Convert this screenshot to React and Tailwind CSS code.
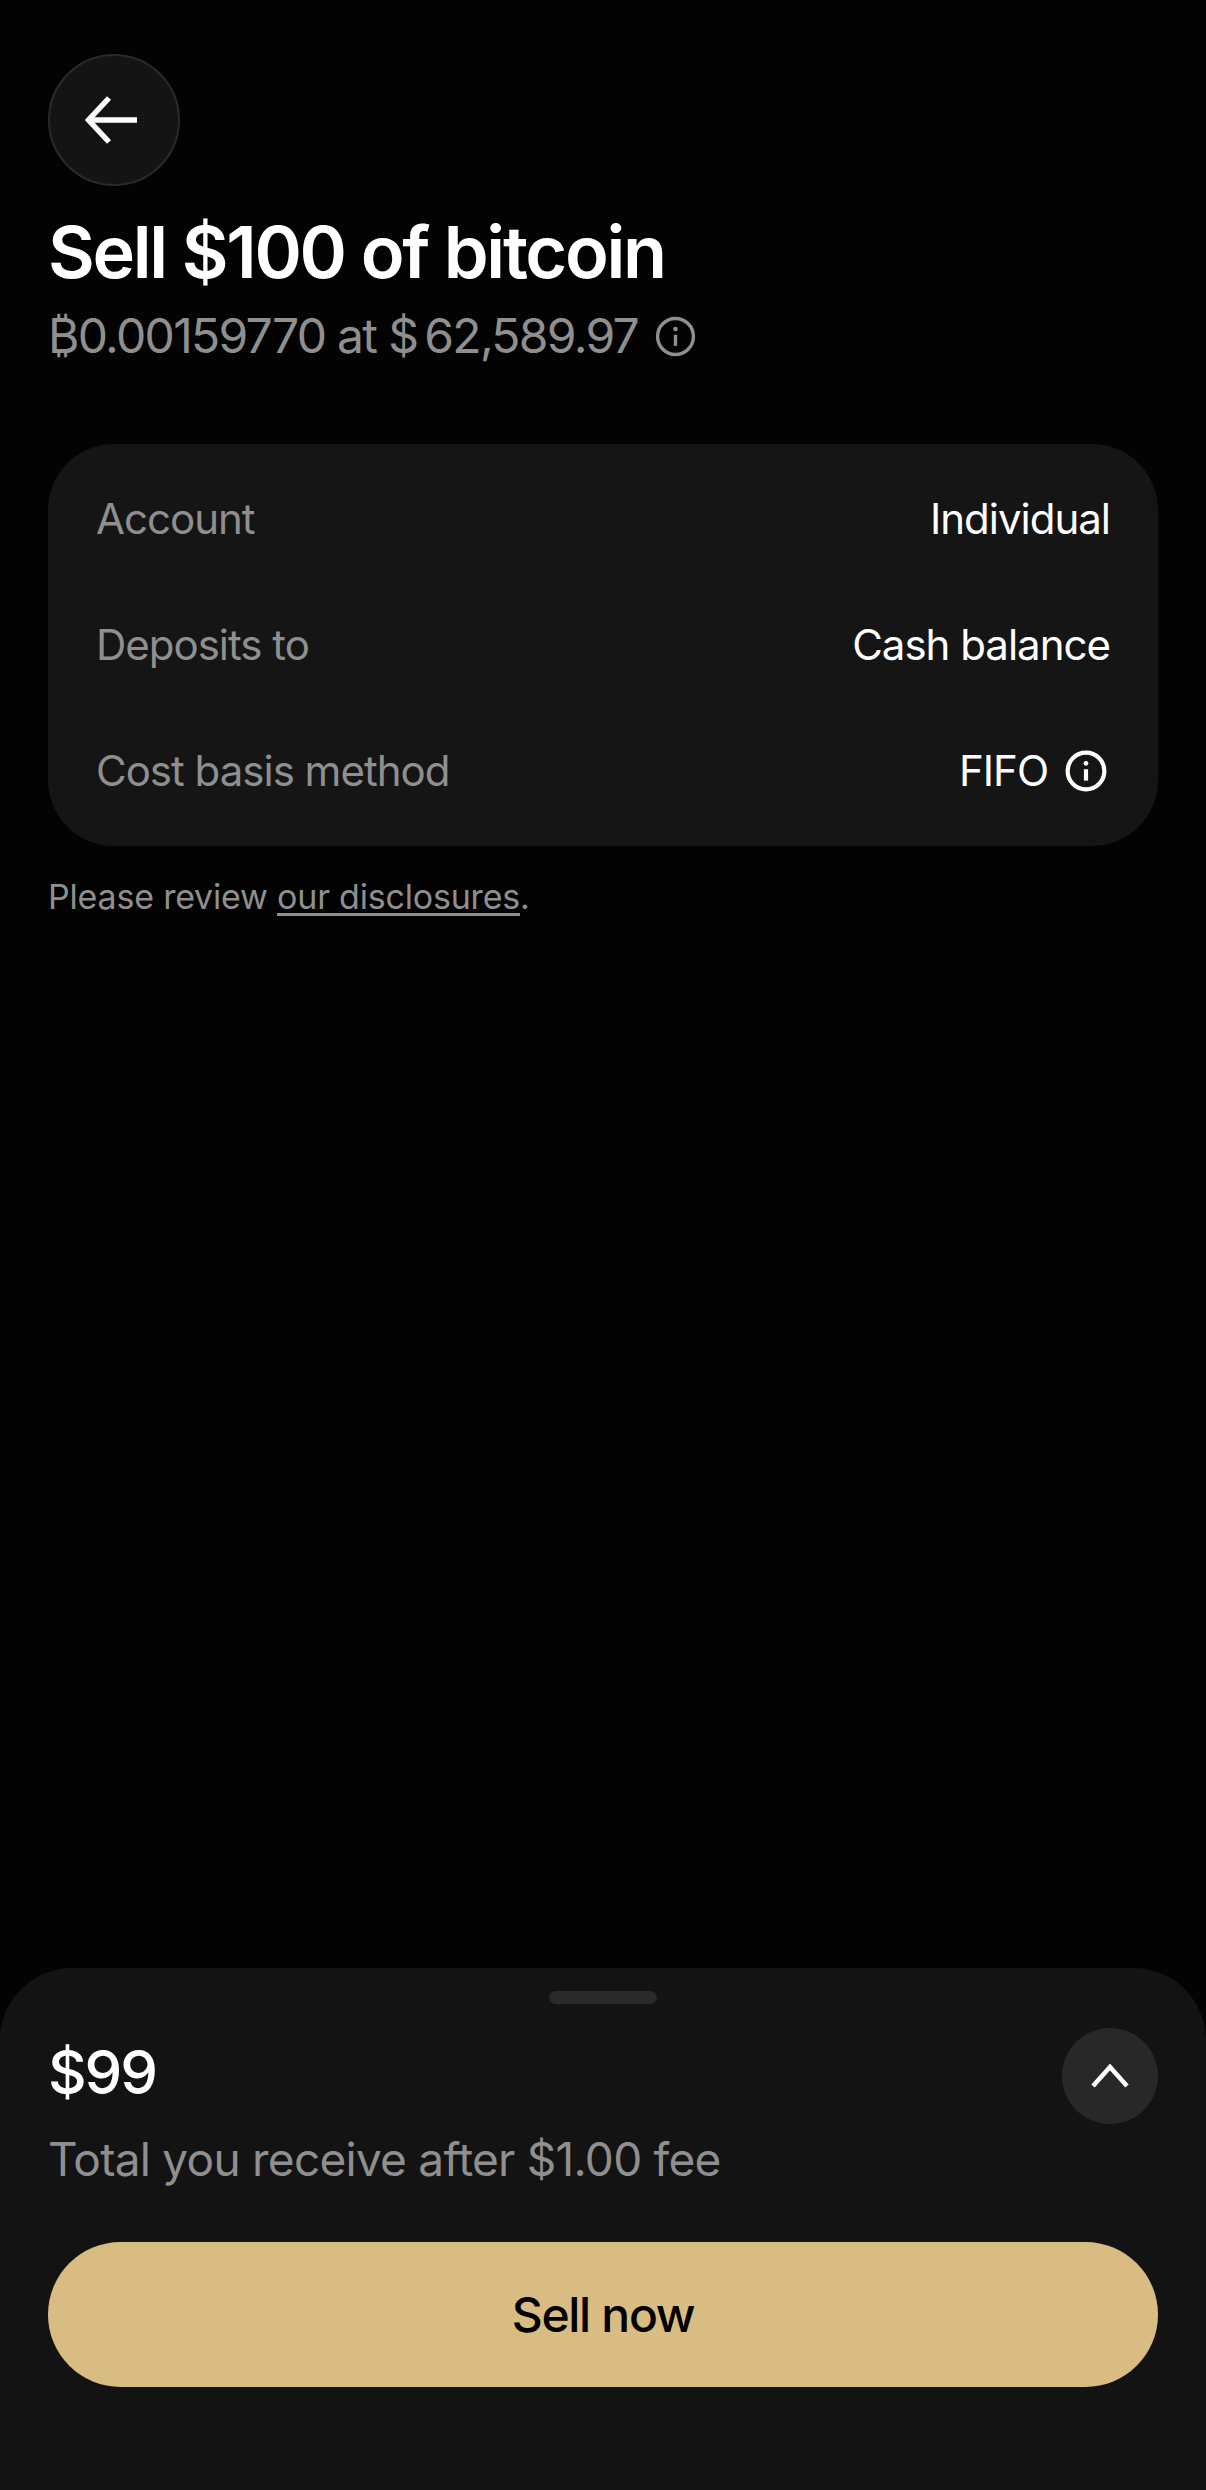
const font = "font-['Inter','Liberation_Sans',sans-serif]";

function Info({ className, sw = 2 }) {
  return (
    <svg viewBox="0 0 24 24" fill="none" className={className}>
      <circle cx="12" cy="12" r="10.5" stroke="currentColor" strokeWidth={sw} />
      <circle cx="12" cy="7.6" r="1.35" fill="currentColor" />
      <path d="M12 11v6.5" stroke="currentColor" strokeWidth={sw} />
    </svg>
  );
}

function Row({ label, children }) {
  return (
    <div className="flex items-center justify-between h-[126px]">
      <span className="text-[42px] leading-[48px] text-[#8f8f8f] tracking-[-1px]">{label}</span>
      <div className="flex items-center text-[42px] leading-[48px] text-white tracking-[-1px]">{children}</div>
    </div>
  );
}

export default function App() {
  return (
    <div className={`${font} w-[1206px] h-[2490px] bg-[#030303] flex flex-col overflow-hidden`}>
      <div className="flex-1 px-12 pt-[54px]">
        <button className="w-[132px] h-[132px] rounded-full bg-[#141414] border-2 border-[#2a2a2a] flex items-center justify-center text-white">
          <svg viewBox="0 0 52 48" fill="none" className="w-[52px] h-[48px] mr-[6px]">
            <path d="M52 24H4M24 2 3.5 24 24 46" stroke="currentColor" strokeWidth="5.5" />
          </svg>
        </button>
        <h1 className="mt-[26px] text-[72px] leading-[80px] font-semibold text-white tracking-[-2.3px]">Sell $100 of bitcoin</h1>
        <div className="mt-4 flex items-center text-[48px] leading-[56px] text-[#8f8f8f] tracking-[-1.7px]">
          <span>₿0.00159770 at $&#8201;62,589.97</span>
          <Info className="ml-[17px] w-[41px] h-[41px]" />
        </div>
        <div className="mt-20 rounded-[66px] bg-[#151515] px-12 h-[402px] flex flex-col justify-center">
          <Row label="Account">Individual</Row>
          <Row label="Deposits to">Cash balance</Row>
          <Row label="Cost basis method">
            <span>FIFO</span>
            <Info className="ml-[17px] mr-[3px] w-[42px] h-[42px]" sw={2.4} />
          </Row>
        </div>
        <p className="mt-[30px] text-[34px] leading-[42px] text-[#8f8f8f] tracking-[-0.2px]">
          Please review <span className="underline underline-offset-[4px]">our disclosures</span>.
        </p>
      </div>
      <div className="relative h-[522px] rounded-t-[72px] bg-[#131313] px-12">
        <div className="absolute left-[549px] top-[23px] w-[108px] h-[13px] rounded-full bg-[#2a2a2a]" />
        <div className="flex justify-between pt-[60px]">
          <div className="pt-2">
            <div className="text-[60px] leading-[72px] font-medium text-white tracking-[-2.2px]">$99</div>
            <div className="mt-[23px] text-[46px] leading-[56px] text-[#8f8f8f] tracking-[-0.75px]">Total you receive after $1.00 fee</div>
          </div>
          <button className="w-24 h-24 rounded-full bg-[#282828] flex items-center justify-center text-white">
            <svg viewBox="0 0 38 24" fill="none" className="w-[38px] h-6">
              <path d="M2 22 19 3l17 19" stroke="currentColor" strokeWidth="4.5" />
            </svg>
          </button>
        </div>
        <button className="mt-[55px] w-full h-[145px] rounded-full bg-[#d8bc82] text-[48px] font-medium text-black tracking-[-1.3px]">Sell now</button>
      </div>
    </div>
  );
}
